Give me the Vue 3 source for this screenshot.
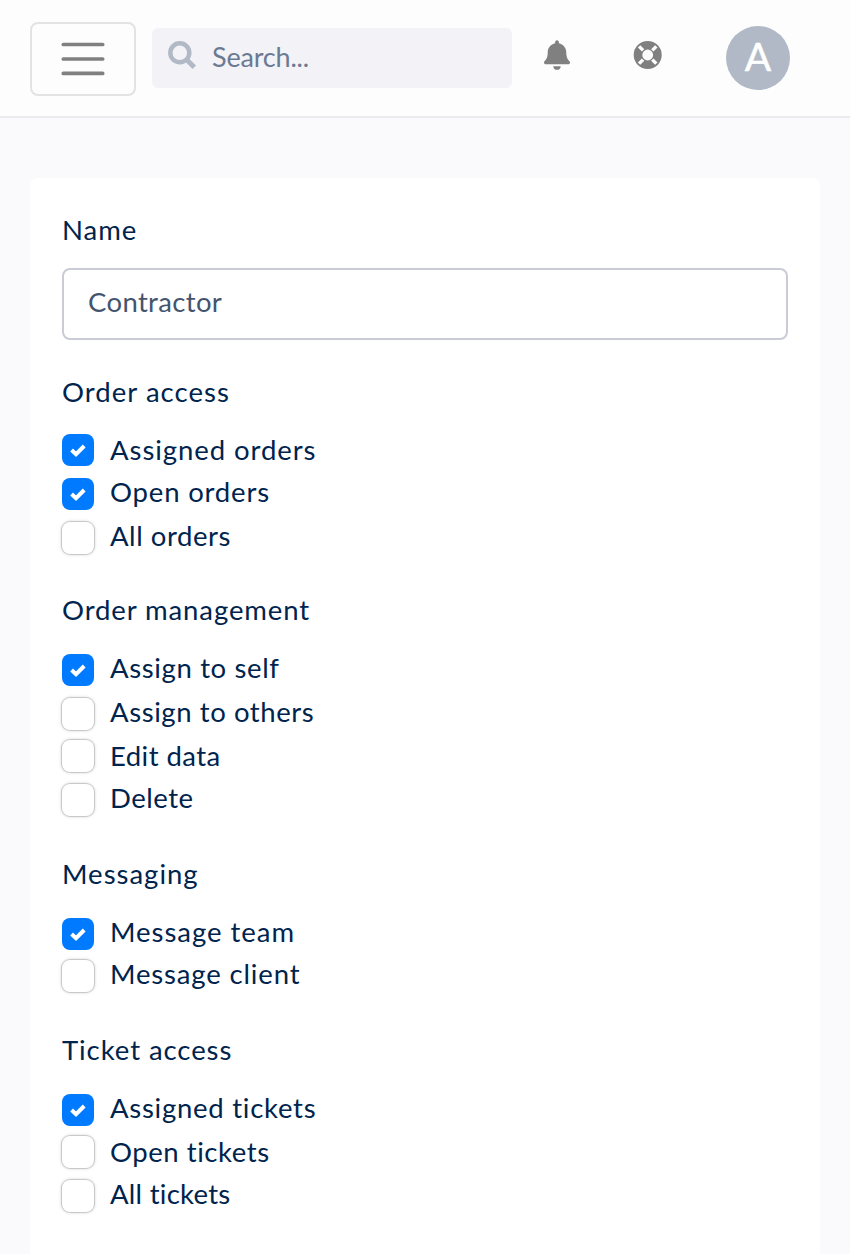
<script setup>
import { ref } from 'vue'

const name = ref('Contractor')

// `tracking` is the letter spacing of a label, in pixels.
const groups = ref([
  {
    title: 'Order access',
    tracking: 1.05,
    compact: true,
    items: [
      { label: 'Assigned orders', tracking: 0.93, checked: true, low: true },
      { label: 'Open orders', tracking: 0.82, checked: true },
      { label: 'All orders', tracking: 0.55, checked: false, tight: true },
    ],
  },
  {
    title: 'Order management',
    tracking: 0.9,
    items: [
      { label: 'Assign to self', tracking: 0.63, checked: true },
      { label: 'Assign to others', tracking: 0.58, checked: false, tight: true },
      { label: 'Edit data', tracking: 0.45, checked: false, low: true },
      { label: 'Delete', tracking: 0.5, checked: false },
    ],
  },
  {
    title: 'Messaging',
    tracking: 1,
    items: [
      { label: 'Message team', tracking: 0.97, checked: true, tight: true },
      { label: 'Message client', tracking: 0.85, checked: false },
    ],
  },
  {
    title: 'Ticket access',
    tracking: 0.93,
    items: [
      { label: 'Assigned tickets', tracking: 0.73, checked: true, tight: true },
      { label: 'Open tickets', tracking: 0.55, checked: false, low: true },
      { label: 'All tickets', tracking: 0.27, checked: false },
    ],
  },
])
</script>

<template>
  <div class="page">
    <header class="topbar">
      <button class="menu" aria-label="Menu">
        <svg width="60" height="60" viewBox="0 0 60 60">
          <path d="M10.300 15.500h39.400M10.300 30h39.400M10.300 44.400h39.400" fill="none" stroke="#808080" stroke-width="3.700" stroke-linecap="round" />
        </svg>
      </button>
      <div class="search">
        <svg class="lens" width="30" height="30" viewBox="0 0 30 30">
          <circle cx="11.800" cy="11.800" r="9.500" fill="none" stroke="#b2b9c6" stroke-width="4.500" />
          <path d="M18.500 18.500L26.300 26.300" stroke="#b2b9c6" stroke-width="4.800" stroke-linecap="butt" />
        </svg>
        <span class="placeholder">Search...</span>
      </div>
      <svg class="bell" width="26" height="30" viewBox="0 0 448 512">
        <path fill="#808080" d="M224 512c35.320 0 63.970-28.650 63.970-64H160.030c0 35.350 28.650 64 63.970 64zm215.390-149.710c-19.320-20.760-55.470-51.990-55.470-154.290 0-77.700-54.480-139.900-127.940-155.160V32c0-17.670-14.320-32-31.980-32s-31.980 14.330-31.980 32v20.840C118.560 68.100 64.080 130.300 64.080 208c0 102.300-36.150 133.530-55.470 154.290-6 6.450-8.660 14.160-8.610 21.710.11 16.400 12.980 32 32.100 32h383.800c19.120 0 32-15.600 32.100-32 .05-7.550-2.610-15.270-8.610-21.710z" />
      </svg>
      <svg class="ring" width="30" height="30" viewBox="0 0 30 30">
        <circle cx="14.700" cy="15" r="9.700" fill="none" stroke="#808080" stroke-width="8.600" />
        <path d="M6.100 6.400l4 4M23.300 6.400l-4 4M6.100 23.600l4-4M23.300 23.600l-4-4" stroke="#fdfdfd" stroke-width="3.400" />
      </svg>
      <div class="avatar">A</div>
    </header>

    <main class="card">
      <label class="field-label" for="role-name">Name</label>
      <input id="role-name" v-model="name" class="field" type="text" />

      <section v-for="group in groups" :key="group.title" class="group">
        <h2 :class="['title', { compact: group.compact }]" :style="{ letterSpacing: group.tracking + 'px' }">{{ group.title }}</h2>
        <label v-for="item in group.items" :key="item.label" :class="['row', { tight: item.tight }]">
          <span :class="['box', { checked: item.checked }]">
            <svg v-if="item.checked" width="16" height="13" viewBox="0 0 16 13">
              <path d="M1.600 6L6 10.200L14.200 2" fill="none" stroke="#fff" stroke-width="4" />
            </svg>
          </span>
          <span :class="['text', { low: item.low }]" :style="{ letterSpacing: item.tracking + 'px' }">{{ item.label }}</span>
        </label>
      </section>
    </main>
  </div>
</template>

<style>
body {
  margin: 0;
  background: #fafafc;
}
</style>

<style scoped>
.page {
  height: 1254px;
  overflow: hidden;
  font-family: Lato, "Liberation Sans", sans-serif;
  font-size: 27.5px;
  color: #00244d;
  background: #fafafc;
}
.topbar {
  box-sizing: border-box;
  height: 118px;
  border-bottom: 2px solid #ebebef;
  background: #fdfdfd;
  display: flex;
  align-items: flex-start;
  padding: 22px 60px 0 30px;
}
.menu {
  box-sizing: border-box;
  width: 106px;
  height: 74px;
  padding: 0;
  border: 2px solid #e3e3e3;
  border-radius: 8px;
  background: transparent;
  display: flex;
  align-items: center;
  justify-content: center;
}
.search {
  box-sizing: border-box;
  width: 360px;
  height: 60px;
  margin: 6px 0 0 16px;
  padding: 11px 0 0 16px;
  border-radius: 6px;
  background: #f2f2f7;
  display: flex;
}
.lens {
  margin-top: 2px;
}
.placeholder {
  margin-left: 14px;
  line-height: 36px;
  font-size: 27px;
  letter-spacing: -0.18px;
  color: #6b7a93;
}
.bell {
  margin: 18px 0 0 32px;
}
.ring {
  margin: 18px 0 0 63px;
}
.avatar {
  width: 64px;
  height: 64px;
  margin: 4px 0 0 auto;
  border-radius: 50%;
  background: #b2b9c6;
  color: #fff;
  font-size: 39px;
  -webkit-text-stroke: 0.5px #fff;
  line-height: 60px;
  text-align: center;
}
.card {
  box-sizing: border-box;
  margin: 60px 30px 0;
  padding: 32px 32px 0;
  height: 1100px;
  border-radius: 8px 8px 0 0;
  background: #fff;
}
.field-label {
  display: block;
  height: 58px;
  line-height: 40px;
  letter-spacing: 0.95px;
}
.field {
  box-sizing: border-box;
  display: block;
  width: 100%;
  height: 72px;
  margin: 0 0 32px;
  padding: 0 24px 6px;
  border: 2px solid #c9ccd7;
  border-radius: 8px;
  background: #fff;
  font: inherit;
  letter-spacing: 0.35px;
  color: #44546f;
  outline: none;
}
.group {
  margin-bottom: 26px;
}
.title {
  height: 64px;
  margin: 0;
  font-size: inherit;
  font-weight: 400;
  line-height: 40px;
}
.title.compact {
  height: 62px;
}
.row {
  display: flex;
  align-items: flex-start;
  height: 44px;
}
.row.tight {
  height: 42px;
}
.box {
  flex: none;
  width: 32px;
  height: 32px;
  border-radius: 8px;
  background: #fff;
  box-shadow: 0 0 0 1px rgba(0, 0, 0, 0.12), 0 0 3px 1px rgba(0, 0, 0, 0.16);
  display: flex;
  align-items: center;
  justify-content: center;
}
.box.checked {
  background: #007aff;
  box-shadow: none;
}
.text {
  margin-left: 16px;
  line-height: 28px;
}
.text.low {
  padding-top: 2px;
}
</style>
